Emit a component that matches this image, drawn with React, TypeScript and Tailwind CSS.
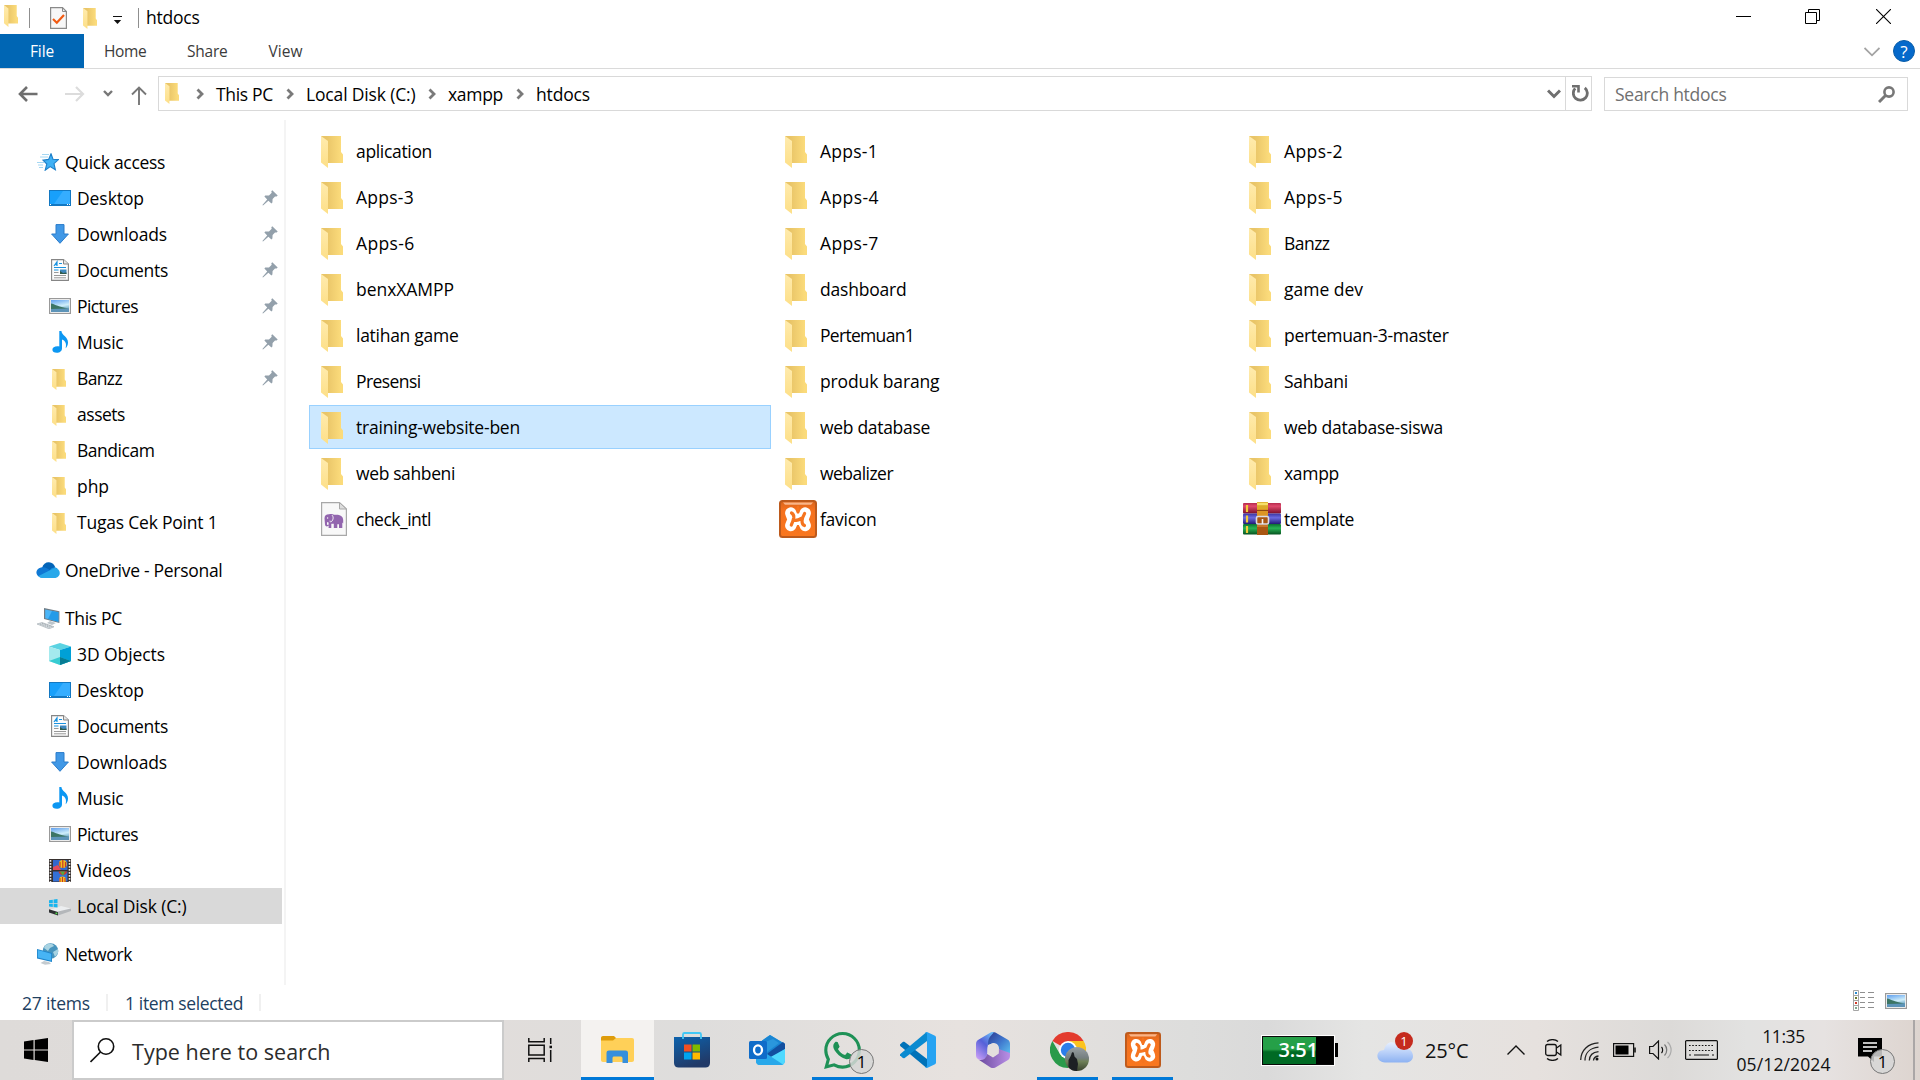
import React, { useLayoutEffect, useRef, useState } from "react";

type IconProps = { className?: string };

/* Text spaced out evenly so that it fills the given width in pixels. */
function Fit({ text, w, className = "" }: { text: string; w: number; className?: string }) {
  const ref = useRef<HTMLSpanElement>(null);
  const [spacing, setSpacing] = useState(0);
  useLayoutEffect(() => {
    const el = ref.current;
    if (el) setSpacing((w - 1.5 - el.getBoundingClientRect().width) / text.length);
  }, []);
  return (
    <span className={`shrink-0 whitespace-nowrap pl-px ${className}`}>
      <span ref={ref} style={{ letterSpacing: spacing }}>{text}</span>
    </span>
  );
}

/* ---------- Explorer icons ---------- */

function Folder({ className = "" }: IconProps) {
  return (
    <svg viewBox="0 0 22 32" preserveAspectRatio="none" className={className}>
      <defs>
        <linearGradient id="fBack" x1="0" x2="1" y1="0" y2="0">
          <stop offset="0.25" stopColor="#e9c568" />
          <stop offset="0.9" stopColor="#fbdb7b" />
        </linearGradient>
        <linearGradient id="fFront" x1="0" x2="0" y1="0" y2="1">
          <stop offset="0" stopColor="#ffebae" />
          <stop offset="1" stopColor="#fddf87" />
        </linearGradient>
      </defs>
      <path d="M0 0H20V16L22 18.5V27H4Z" fill="url(#fBack)" />
      <path d="M0 0L7 5V32L0 26.5Z" fill="url(#fFront)" />
    </svg>
  );
}

function QuickStar() {
  return (
    <svg width="22" height="18" viewBox="0 0 22 18">
      <path d="M14 .8L16 6.2L21.4 6.6L17 10.6L18.4 16.8L13.2 13.6L8.2 17.2L9.8 11L6 7.2L11.6 6.4Z" fill="#3fb1f5" stroke="#1d7fc9" strokeWidth="1.1" />
      <path d="M5 1.5H12M3 4H11M0 9.5H7M1 12H6M2 14.5H6" stroke="#9ad2f2" strokeWidth=".9" />
    </svg>
  );
}

function Desktop() {
  return (
    <svg width="22" height="16" viewBox="0 0 22 16">
      <rect width="22" height="16" fill="#1378c2" />
      <rect x="1" y="1" width="20" height="13" fill="#18a0fb" />
      <path d="M14 1H21V14H5Z" fill="#35adff" />
      <path d="M1 14.5H2M18 14.5H19M20 14.5H21" stroke="#fff" />
    </svg>
  );
}

function Download() {
  return (
    <svg width="18" height="20" viewBox="0 0 18 20">
      <path d="M5 .6H13V10H17.4L9 19.3L.6 10H5Z" fill="#4198e6" stroke="#2a7ccb" strokeWidth="1" />
    </svg>
  );
}

function Doc() {
  return (
    <svg width="18" height="22" viewBox="0 0 18 22">
      <path d="M.6 .6H12.5L17.4 5V21.4H.6Z" fill="#fcfcfc" stroke="#858585" strokeWidth="1.1" />
      <path d="M12.5 .6V5H17.4" fill="#e8e8e8" stroke="#858585" />
      <path d="M3 7L6 2.8V7M4 5.7H6M8 4.5H11M3 8.5H15M3 11H7.5" fill="none" stroke="#1a93e0" strokeWidth="1.2" />
      <rect x="9" y="10.5" width="6.5" height="4.5" fill="#3e87bd" />
      <path d="M9 15V12L12 14L15.5 13.5V15Z" fill="#315a4b" />
      <path d="M3 13.5H7.5M3 16.5H15M3 18.8H15" stroke="#999" />
    </svg>
  );
}

function Picture({ className = "w-[22px] h-4" }: IconProps) {
  return (
    <svg viewBox="0 0 22 16" preserveAspectRatio="none" className={className}>
      <defs>
        <linearGradient id="sky" x1="0" x2="0.3" y1="0" y2="1">
          <stop offset="0" stopColor="#5f9fee" />
          <stop offset="0.6" stopColor="#cfeefa" />
          <stop offset="1" stopColor="#5b9bbd" />
        </linearGradient>
      </defs>
      <rect x=".6" y=".6" width="20.8" height="14.8" fill="#fff" stroke="#999" strokeWidth="1.2" />
      <rect x="2" y="2" width="18" height="12" fill="url(#sky)" />
      <path d="M2 5.5C6 6 8 9 20 10.3L12 11.5L2 11Z" fill="#3c7564" />
      <path d="M2 11L20 10.5V14H2Z" fill="#5d94b8" />
    </svg>
  );
}

function Music() {
  return (
    <svg width="17" height="22" viewBox="0 0 17 22">
      <path d="M7.3 0H9.4C10 4.8 16 5.6 16 11.5C16 14 15 16 13.6 17.2C15 12.5 13 9.5 10 8.6V17.2C10 20 7.6 21.8 4.8 21.8C2 21.8.4 20.4.4 18.7C.4 16.4 3 14.8 7.3 15.4Z" fill="#0c97f2" />
    </svg>
  );
}

function Cloud() {
  return (
    <svg width="24" height="16" viewBox="0 0 24 16">
      <path d="M6 6C7 2 10 0 13 .2C16 .4 18.5 2.5 19.3 5.3L13 10Z" fill="#0364b8" />
      <path d="M5 15.5C-1 14.5-1.3 7 5 5.6C9 4.7 11 6.3 14.5 8.5L6 15.5Z" fill="#0f78d4" />
      <path d="M14 8C16 5.2 20 4.8 21.5 7L16 12Z" fill="#1490df" />
      <path d="M2.5 14L13.5 8.5L19 6C25 6.5 25.5 15 19.5 16H6C4.5 16 3.2 15 2.5 14Z" fill="#28a8ea" />
    </svg>
  );
}

function ThisPC() {
  return (
    <svg width="23" height="21" viewBox="0 0 23 21">
      <path d="M7 0L22.4 3.3V15L7 11Z" fill="#707c85" />
      <path d="M8.2 1.5L21.4 4.3V13.7L8.2 10.2Z" fill="#4ab5f7" />
      <path d="M15 2.9L21.4 4.3V13.7L11 11Z" fill="#239be8" />
      <path d="M13 13L19 15L15 17L10 15Z" fill="#bcc5cb" />
      <path d="M0 16L5 14.5L17 18.8L12 20.8Z" fill="#d7dde1" stroke="#9fa8ae" strokeWidth=".6" />
      <path d="M3 16L13 19.5M5 15.2L15 18.8" stroke="#8f989e" strokeWidth=".7" strokeDasharray="1.5 1" />
    </svg>
  );
}

function Cube() {
  return (
    <svg width="22" height="22" viewBox="0 0 22 22">
      <path d="M11 0L22 3.5L11 7L0 3.5Z" fill="#5bd3e2" />
      <path d="M0 3.5L11 7V22L0 18Z" fill="#a4eaee" />
      <path d="M22 3.5L11 7V22L22 18Z" fill="#00a0d6" />
      <path d="M11 14L22 18L11 22L0 18Z" fill="#37ccd2" />
      <path d="M11 14L22 18L11 22Z" fill="#077c94" />
    </svg>
  );
}

function Video() {
  return (
    <svg width="22" height="23" viewBox="0 0 22 23">
      <rect width="22" height="23" fill="#37302e" />
      <rect x="4" y="1" width="14.5" height="10" fill="#3167cd" />
      <rect x="4" y="12.5" width="14.5" height="10" fill="#3470d6" />
      <path d="M1.5 1V23M20.5 1V23" stroke="#e9e9e9" strokeWidth="1.6" strokeDasharray="1.8 1.2" />
      <path d="M4 8L9 6L12 11H4Z" fill="#e14a5b" />
      <circle cx="13.8" cy="5" r="4" fill="#f2c020" />
      <path d="M13.8 1V9M11 3V8M16.5 3V8" stroke="#c8372b" strokeWidth="1.2" />
      <path d="M9.5 12.5C10 17 18 17 18 12.5Z" fill="#cf3929" />
      <path d="M11 12.5L14 17L16 12.5Z" fill="#56a83c" />
      <circle cx="13.5" cy="21" r="3.4" fill="#f2c020" />
      <path d="M13.5 18V23M11 19V23M16 19V23" stroke="#c8372b" strokeWidth="1" />
    </svg>
  );
}

function Disk() {
  return (
    <svg width="22" height="17" viewBox="0 0 22 17" className="mt-[3px]">
      <path d="M0 11L12 7L22 9.5V11.5L9 15.5L0 12.5Z" fill="#eceef0" />
      <path d="M9 12.5L22 9.5V12L9 16.5Z" fill="#b4b7ba" />
      <path d="M0 10.2L9 12.9V16.6L0 13.6Z" fill="#2e3032" />
      <rect x="6.5" y="13.6" width="1.8" height="1.6" fill="#4fe04b" />
      <path d="M0 1.2L3.8 .7V4H0ZM4.6 .6L8.5 0V4H4.6ZM0 4.8H3.8V8L0 7.6ZM4.6 4.8H8.5V8.6L4.6 8Z" fill="#19b5ee" />
    </svg>
  );
}

function Network() {
  return (
    <svg width="22" height="22" viewBox="0 0 22 22">
      <circle cx="13.5" cy="8" r="7.8" fill="#4794bd" />
      <path d="M8 2.5C11 0 16 .4 17 3L13 5L11 8L7 5ZM16 9L21 6V10L18 14Z" fill="#a8d3e2" />
      <path d="M0 6L15 10V19L0 15.5Z" fill="#1f84ca" />
      <path d="M.8 7L14.2 10.8V17.8L.8 14.6Z" fill="#47b4f5" />
      <path d="M7 18L12 19L14 21L8 21.7L3.5 20Z" fill="#c4cbd0" />
    </svg>
  );
}

function Pin() {
  return (
    <svg width="16" height="16" viewBox="0 0 16 16">
      <path d="M10.3 .3L15.7 5.5L14.6 6.6L13 6.4L10.6 9L10.4 12.6L9.4 13.4L6.4 10.7L1 15.6L.4 15L5.2 9.6L2.4 6.6L3.2 5.4L7 5.4L9.7 2.7L9.3 1.3Z" fill="#93a0ab" />
    </svg>
  );
}

function PhpFile() {
  return (
    <svg width="26" height="34" viewBox="0 0 26 34">
      <path d="M.6 .6H18.5L25.4 7V33.4H.6Z" fill="#f8f8f8" stroke="#a8a8a8" strokeWidth="1.2" />
      <path d="M18.5 .6V7H25.4Z" fill="#ddd" stroke="#a8a8a8" />
      <path d="M3.5 16.5C3.5 13.5 5 12.3 8 12.3C10 11.6 12 11.8 13 12.8C18 12.2 22 13.3 22.2 18V21.5L21.3 20.5V26H18V22.3H16.3V26H12.8V21.8H10.3V26H7.6V20.5C6.8 20.5 6.2 20.3 6 20V22C6 23.2 7 23.2 7 22.4L7.6 23C7.4 25 4.2 25 4 22.6Z" fill="#9265ae" />
      <path d="M10.8 13C12.8 14.5 12.5 18 10.3 19.7M10.3 19.7C9.5 20.2 8.8 19.5 9 18.7" fill="none" stroke="#f8f8f8" strokeWidth="1" />
      <circle cx="6.6" cy="16" r=".7" fill="#f8f8f8" />
    </svg>
  );
}

function Xampp({ className = "" }: IconProps) {
  return (
    <svg viewBox="0 0 38 38" className={className} preserveAspectRatio="none">
      <defs>
        <linearGradient id="xg" x1="0" x2="0" y1="0" y2="1">
          <stop offset="0" stopColor="#d9641c" />
          <stop offset="0.25" stopColor="#f5711e" />
          <stop offset="1" stopColor="#f9771f" />
        </linearGradient>
      </defs>
      <rect x="1" y="1" width="36" height="36" rx="2.5" fill="url(#xg)" stroke="#bd5a1c" strokeWidth="2" />
      <path d="M4 2.4H34L32 4.8H6Z" fill="#f9b588" />
      <g fill="none" strokeLinecap="round" strokeLinejoin="round">
        <path d="M11.8 13C12.5 16 14 17.5 14 19.3C14 21 12.5 23 11.8 25.5M26.2 13C25.5 16 24 17.5 24 19.3C24 21 25.5 23 26.2 25.5M14 19.3H24" stroke="#fff" strokeWidth="11.4" />
        <path d="M19 7V11.5M19 31.5V27.5" stroke="#f5741f" strokeWidth="2.6" />
        <path d="M12.5 13C14.5 14 15 15 14.8 17.5C14.5 19 14 21.5 12.3 25M25.6 13.5C23.6 17 23 18.5 23 21C23 23.5 24 25 25.5 25.5M14.5 20.5C17 20.5 20.5 20 23 18" stroke="#f5741f" strokeWidth="3.2" />
      </g>
    </svg>
  );
}

function WinRar() {
  return (
    <svg width="38" height="34" viewBox="0 0 38 34">
      <defs>
        <linearGradient id="rr" x1="0" x2="0" y1="0" y2="1"><stop offset="0" stopColor="#b52a4c" /><stop offset="0.3" stopColor="#e04a6e" /><stop offset="1" stopColor="#7c1029" /></linearGradient>
        <linearGradient id="rb" x1="0" x2="0" y1="0" y2="1"><stop offset="0" stopColor="#3a34a0" /><stop offset="0.4" stopColor="#6a6ae0" /><stop offset="1" stopColor="#231b78" /></linearGradient>
        <linearGradient id="rgn" x1="0" x2="0" y1="0" y2="1"><stop offset="0" stopColor="#0c7030" /><stop offset="0.4" stopColor="#28b455" /><stop offset="1" stopColor="#07521f" /></linearGradient>
      </defs>
      <rect x="0" y="1" width="38" height="10.5" rx="1" fill="url(#rr)" />
      <rect x="0" y="11.5" width="38" height="10.5" rx="1" fill="url(#rb)" />
      <rect x="0" y="22" width="38" height="10.5" rx="1" fill="url(#rgn)" />
      <path d="M4 3V10M4 13.5V20.5M4 24V31" stroke="#f3cd3a" strokeWidth="2.2" />
      <rect x="14" y="0" width="11" height="8" fill="#dcab28" />
      <path d="M14 2H25" stroke="#f5e06a" strokeWidth="2.4" />
      <rect x="14" y="11" width="11" height="22" fill="#a95713" />
      <path d="M14 24H25" stroke="#c9792a" strokeWidth="2" />
      <rect x="14" y="7" width="11" height="8" fill="#dd9523" />
      <path d="M14 8.5H25" stroke="#8f4a10" strokeWidth="1" />
      <rect x="13.5" y="14.5" width="12" height="7.5" rx="1.5" fill="none" stroke="#dcdce2" strokeWidth="1.6" />
      <path d="M19.5 17V22" stroke="#f0f0f4" strokeWidth="1.6" />
    </svg>
  );
}

/* ---------- Title, ribbon, address ---------- */

function TitleBar() {
  return (
    <div className="flex h-[34px] w-full shrink-0">
      <div className="flex h-[34px] w-[145px] shrink-0">
        <div className="w-[29px] pl-1 pt-[5px]"><Folder className="w-[14px] h-[22px]" /></div>
        <div className="mt-2 h-5 w-px bg-[#8f8f8f]" />
        <div className="w-[53px] pl-5 pt-[7px]">
          <svg width="17" height="22" viewBox="0 0 17 22">
            <path d="M.6 .6H12.5L16.4 4.5V21.4H.6Z" fill="#f7f7f7" stroke="#8a8a8a" strokeWidth="1.2" />
            <path d="M12.5 .6V4.5H16.4" fill="none" stroke="#8a8a8a" />
            <path d="M3 12L6.8 15.7L14 8" fill="none" stroke="#f15a12" strokeWidth="2.2" />
          </svg>
        </div>
        <div className="w-[30px] pt-2"><Folder className="w-[14px] h-[21px]" /></div>
        <div className="w-[25px] pt-4">
          <svg width="9" height="8" viewBox="0 0 9 8"><path d="M0 .5H9" stroke="#111" /><path d="M.8 4H8.2L4.5 8Z" fill="#111" /></svg>
        </div>
        <div className="mt-2 h-5 w-px bg-[#8f8f8f]" />
      </div>
      <Fit text="htdocs" w={55} className="text-[17.5px] leading-[35px]" />
      <div className="ml-auto flex pt-[9px]">
        <svg width="15" height="15" viewBox="0 0 15 15" className="mr-[54px]"><path d="M0 7.5H15" stroke="#000" /></svg>
        <svg width="15" height="15" viewBox="0 0 15 15" className="mr-14" fill="none" stroke="#000"><path d="M.5 3.5H11.5V14.5H.5ZM3.5 3V.5H14.5V11.5H12" /></svg>
        <svg width="15" height="15" viewBox="0 0 15 15" className="mr-[29px]"><path d="M0 0L15 15M15 0L0 15" stroke="#000" strokeWidth="1.1" /></svg>
      </div>
    </div>
  );
}

function Ribbon() {
  return (
    <div className="flex h-[35px] shrink-0 border-b border-[#dadada] text-[15.5px] leading-[35px] text-[#3b3b3b]">
      <div className="h-[34px] w-[84px] shrink-0 bg-[#0066b4] pl-[29px] text-white"><Fit text="File" w={25.5} /></div>
      <div className="w-[83px] pl-[19px]"><Fit text="Home" w={44} /></div>
      <div className="w-[81px] pl-[19px]"><Fit text="Share" w={42} /></div>
      <div className="w-[81px] pl-[19.5px]"><Fit text="View" w={35.5} /></div>
      <div className="ml-auto flex">
        <svg width="16" height="10" viewBox="0 0 16 10" className="mt-[13px]" fill="none" stroke="#a3a3a3" strokeWidth="1.8"><path d="M.5 1L8 8.3L15.5 1" /></svg>
        <div className="ml-[13px] mr-[5px] mt-[6px] flex h-[22px] w-[22px] items-center justify-center rounded-full border border-[#0a5da8] bg-[#0569cb] text-[17px] leading-none text-white">?</div>
      </div>
    </div>
  );
}

function Crumb({ label, w, className }: { label: string; w: number; className: string }) {
  return (
    <div className={`flex shrink-0 items-center ${className}`}>
      <svg viewBox="0 0 8 12" className="h-[12px] w-[8px] shrink-0" fill="none" stroke="#7a7a7a" strokeWidth="2.8">
        <path d="M1.5 1.5L6 6L1.5 10.5" />
      </svg>
      <Fit text={label} w={w} className="ml-[11px] mt-px" />
    </div>
  );
}

function AddressRow() {
  return (
    <div className="flex h-[51px] shrink-0 pt-[7px] text-[17.5px]">
      <div className="flex h-[35px] w-[158px] shrink-0 items-center">
        <svg width="20" height="16" viewBox="0 0 20 16" className="ml-[18px]" fill="none" stroke="#6f6f6f" strokeWidth="2.6"><path d="M9 1L2 8L9 15M2 8H19.5" /></svg>
        <svg width="20" height="16" viewBox="0 0 20 16" className="ml-[27px]" fill="none" stroke="#dcdcdc" strokeWidth="2.2"><path d="M11 1L18 8L11 15M18 8H0" /></svg>
        <svg width="10" height="7" viewBox="0 0 10 7" className="ml-[18px]" fill="none" stroke="#777" strokeWidth="2.4"><path d="M1 1L5 5L9 1" /></svg>
        <svg width="16" height="19" viewBox="0 0 16 19" className="ml-[18px] mt-1" fill="none" stroke="#777" strokeWidth="1.9"><path d="M1 8.5L8 1.5L15 8.5M8 2V19" /></svg>
      </div>
      <div className="flex h-[35px] w-[1434px] shrink-0 items-center border border-[#d9d9d9]">
        <Folder className="ml-1.5 h-[21px] w-[14px] shrink-0" />
        <Crumb label="This PC" w={58.5} className="ml-[17px] w-[90px]" />
        <Crumb label="Local Disk (C:)" w={111} className="w-[142px]" />
        <Crumb label="xampp" w={56.5} className="w-[88px]" />
        <Crumb label="htdocs" w={55.5} className="" />
        <svg width="14" height="10" viewBox="0 0 14 10" className="ml-auto mr-[4px] shrink-0" fill="none" stroke="#6f6f6f" strokeWidth="3"><path d="M1 1.5L7 7.5L13 1.5" /></svg>
        <div className="flex h-[33px] w-[26px] shrink-0 items-center border-l border-[#d9d9d9] pl-[6px]">
          <svg width="17" height="17" viewBox="0 0 17 17" fill="none" stroke="#6f6f6f"><path d="M12.8 2.8A7 7 0 1 1 3.2 3.4" strokeWidth="2.8" /><path d="M0 1.3H6.5V7.5" strokeWidth="2.6" /></svg>
        </div>
      </div>
      <div className="ml-3 mt-px flex h-[34px] w-[304px] shrink-0 items-center border border-[#d9d9d9] pl-[9px] text-[#707070]">
        <Fit text="Search htdocs" w={113} className="mt-px" />
        <svg width="17" height="17" viewBox="0 0 17 17" className="ml-auto mr-3" fill="none" stroke="#777"><circle cx="11" cy="6" r="4.6" strokeWidth="2.6" /><path d="M7.5 9.5L1 16" strokeWidth="3" /></svg>
      </div>
    </div>
  );
}

/* ---------- Sidebar ---------- */

type Nav = { label: string; w: number; icon: React.ReactNode; pinned?: boolean; selected?: boolean };

const smallFolder = <Folder className="mr-[2px] mt-0.5 h-[21px] w-[14px]" />;

const quick: Nav[] = [
  { label: "Desktop", w: 68.5, icon: <Desktop />, pinned: true },
  { label: "Downloads", w: 91.5, icon: <Download />, pinned: true },
  { label: "Documents", w: 92.5, icon: <Doc />, pinned: true },
  { label: "Pictures", w: 62.5, icon: <Picture />, pinned: true },
  { label: "Music", w: 48, icon: <Music />, pinned: true },
  { label: "Banzz", w: 46.5, icon: smallFolder, pinned: true },
  { label: "assets", w: 49.5, icon: smallFolder },
  { label: "Bandicam", w: 79, icon: smallFolder },
  { label: "php", w: 33.5, icon: smallFolder },
  { label: "Tugas Cek Point 1", w: 142, icon: smallFolder },
];

const pc: Nav[] = [
  { label: "3D Objects", w: 89.5, icon: <Cube /> },
  { label: "Desktop", w: 68.5, icon: <Desktop /> },
  { label: "Documents", w: 92.5, icon: <Doc /> },
  { label: "Downloads", w: 91.5, icon: <Download /> },
  { label: "Music", w: 48, icon: <Music /> },
  { label: "Pictures", w: 62.5, icon: <Picture /> },
  { label: "Videos", w: 55.5, icon: <Video /> },
  { label: "Local Disk (C:)", w: 111, icon: <Disk />, selected: true },
];

function Root({ label, w, icon, className = "" }: { label: string; w: number; icon: React.ReactNode; className?: string }) {
  return (
    <div className={`flex h-9 items-center pl-9 ${className}`}>
      <div className="flex w-6 shrink-0 justify-center">{icon}</div>
      <Fit text={label} w={w} className="ml-1" />
    </div>
  );
}

function Child({ item }: { item: Nav }) {
  return (
    <div className={`flex h-9 w-[282px] items-center pl-12 ${item.selected ? "bg-[#d9d9d9]" : ""}`}>
      <div className="flex w-6 shrink-0 justify-center">{item.icon}</div>
      <Fit text={item.label} w={item.w} className="ml-1" />
      {item.pinned && <div className="ml-auto mr-1"><Pin /></div>}
    </div>
  );
}

function Sidebar() {
  return (
    <div className="h-[865px] w-[286px] shrink-0 border-r-2 border-[#f4f4f4] pt-6">
      <Root label="Quick access" w={101.5} icon={<QuickStar />} />
      {quick.map((n) => <Child key={n.label} item={n} />)}
      <Root label="OneDrive - Personal" w={159} icon={<Cloud />} className="mt-3" />
      <Root label="This PC" w={58.5} icon={<ThisPC />} className="mt-3" />
      {pc.map((n) => <Child key={n.label} item={n} />)}
      <Root label="Network" w={68.5} icon={<Network />} className="mt-3" />
    </div>
  );
}

/* ---------- File grid ---------- */

const files: [string, number][] = [
  ["aplication", 77.5], ["Apps-1", 59.5], ["Apps-2", 60.5],
  ["Apps-3", 59.5], ["Apps-4", 60.5], ["Apps-5", 60.5],
  ["Apps-6", 60], ["Apps-7", 60], ["Banzz", 47],
  ["benxXAMPP", 99.5], ["dashboard", 88], ["game dev", 80.5],
  ["latihan game", 104], ["Pertemuan1", 95.5], ["pertemuan-3-master", 166],
  ["Presensi", 66], ["produk barang", 121], ["Sahbani", 65.5],
  ["training-website-ben", 165.5], ["web database", 111.5], ["web database-siswa", 160.5],
  ["web sahbeni", 100.5], ["webalizer", 74.5], ["xampp", 56.5],
  ["check_intl", 76.5], ["favicon", 58], ["template", 71.5],
];

function FileIcon({ name }: { name: string }) {
  if (name === "check_intl") return <div className="pl-1.5"><PhpFile /></div>;
  if (name === "favicon") return <Xampp className="h-[38px] w-[38px]" />;
  if (name === "template") return <WinRar />;
  return <Folder className="ml-1.5 mt-0.5 h-8 w-[22px]" />;
}

function FileGrid() {
  return (
    <div className="grid auto-rows-[44px] grid-cols-[462px_462px_462px] content-start gap-x-0.5 gap-y-0.5 pl-[23px] pt-[9px]">
      {files.map(([name, w]) => (
        <div
          key={name}
          className={`flex items-center border pl-[5px] ${name === "training-website-ben" ? "border-[#99d1ff] bg-[#cce8ff]" : "border-transparent"}`}
        >
          <div className="w-[38px] shrink-0">
            <FileIcon name={name} />
          </div>
          <Fit text={name} w={w} className="ml-0.5" />
        </div>
      ))}
    </div>
  );
}

function StatusBar() {
  return (
    <div className="flex h-[35px] shrink-0 text-[17.5px] leading-[37px] text-[#21405f]">
      <div className="w-[106px] pl-[21px]"><Fit text="27 items" w={69.5} /></div>
      <div className="mt-[9px] h-[17px] w-0.5 bg-[#f0f0f0]" />
      <div className="w-[151px] pl-[16px]"><Fit text="1 item selected" w={119.5} /></div>
      <div className="mt-[9px] h-[17px] w-0.5 bg-[#f0f0f0]" />
      <div className="ml-auto flex pt-[5px]">
        <svg width="21" height="21" viewBox="0 0 21 21">
          <path d="M.5 .5H5.5V20.5H.5ZM.5 5.5H5.5M.5 10.5H5.5M.5 15.5H5.5" fill="#fff" stroke="#a5a5a5" />
          <path d="M7 2.5H12M15 2.5H21M7 7.5H12M15 7.5H21M7 12.5H12M15 12.5H21M7 17.5H12M15 17.5H21" stroke="#8f8f8f" />
          <rect x="2" y="2" width="2" height="2" fill="#2a8bd0" />
          <rect x="2" y="7" width="2" height="2" fill="#6c7c2c" />
          <rect x="2" y="12" width="2" height="2" fill="#d23b28" />
          <rect x="2" y="17" width="2" height="2" fill="#7fa98c" />
        </svg>
        <Picture className="ml-[11px] mr-[13px] mt-[3px] h-4 w-[22px]" />
      </div>
    </div>
  );
}

/* ---------- Taskbar ---------- */

function Slot({ children, active = false }: { children: React.ReactNode; active?: boolean }) {
  return (
    <div className="relative flex h-[60px] w-[75px] shrink-0 items-center justify-center">
      {children}
      {active && <div className="absolute inset-x-[7px] bottom-0 h-[3px] bg-[#0079d8]" />}
    </div>
  );
}

function Badge({ className = "" }: IconProps) {
  return (
    <div className={`absolute flex h-[25px] w-[25px] items-center justify-center rounded-full border border-[#777] bg-[#d6d6d6]/85 text-[17px] leading-none text-black ${className}`}>1</div>
  );
}

function Explorer() {
  return (
    <svg width="33" height="28" viewBox="0 0 33 28">
      <path d="M0 2C0 .8 .8 0 2 0H13L16 3L13 6H0Z" fill="#de9c0b" />
      <path d="M0 4.5H12L15 2H31C32.2 2 33 2.8 33 4V24C33 25.2 32.2 26 31 26H2C.8 26 0 25.2 0 24Z" fill="#ffd058" />
      <path d="M5.5 27V17C5.5 15.3 6.5 14.5 8 14.5H24.5C26 14.5 27 15.3 27 17V27H21.5V22.5C21.5 21 20.7 20.5 19.5 20.5H13.5C12 20.5 11.5 21 11.5 22.5V27Z" fill="#378fdc" />
    </svg>
  );
}

function Store() {
  return (
    <svg width="36" height="36" viewBox="0 0 36 36">
      <defs><linearGradient id="st" x1="0" x2="0.4" y1="0" y2="1"><stop offset="0" stopColor="#0c62ad" /><stop offset="1" stopColor="#213a68" /></linearGradient></defs>
      <path d="M0 5H36V31C36 34 34 35.5 31.5 35.5H4.5C2 35.5 0 34 0 31Z" fill="url(#st)" />
      <path d="M9 7V2.5C9 1.4 9.7 1 10.5 1H25.5C26.4 1 27 1.5 27 2.5V7" fill="none" stroke="#42c7f5" strokeWidth="1.8" />
      <rect x="10" y="12.5" width="7.5" height="7" fill="#f25022" /><rect x="18.5" y="12.5" width="7.5" height="7" fill="#7fba00" />
      <rect x="10" y="20.5" width="7.5" height="7" fill="#00a4ef" /><rect x="18.5" y="20.5" width="7.5" height="7" fill="#ffb900" />
    </svg>
  );
}

function Outlook() {
  return (
    <svg width="37" height="30" viewBox="0 0 37 30">
      <path d="M7 10L21 0L36 9V25C36 28 34.5 30 32 30H11C8 30 7 28 7 26Z" fill="#28a8ea" />
      <path d="M13 5.5L21 0L36 9L22 18H12Z" fill="#1a85d2" />
      <path d="M15 21L34 7L36 9V14L20 25Z" fill="#124fa0" />
      <path d="M11 9L24 4L30 8L18 17Z" fill="#2a97dd" />
      <path d="M9 29L36 14V25C36 28 34.5 30 32 30H11Z" fill="#4fd9ff" />
      <path d="M7 22L18 19L34 29.5C33 30 32 30 32 30H11C8 30 7 28 7 26Z" fill="#28a8ea" />
      <rect x="0" y="6" width="18" height="18" rx="1.5" fill="#0f6cc9" />
      <ellipse cx="9" cy="15" rx="4" ry="4.6" fill="none" stroke="#fff" strokeWidth="2.3" />
    </svg>
  );
}

function WhatsApp() {
  return (
    <svg width="37" height="37" viewBox="0 0 24 24" fill="#1e9156">
      <path d="M17.472 14.382c-.297-.149-1.758-.867-2.03-.967-.273-.099-.471-.148-.67.15-.197.297-.767.966-.94 1.164-.173.199-.347.223-.644.075-.297-.15-1.255-.463-2.39-1.475-.883-.788-1.48-1.761-1.653-2.059-.173-.297-.018-.458.13-.606.134-.133.298-.347.446-.52.149-.174.198-.298.298-.497.099-.198.05-.371-.025-.52-.075-.149-.669-1.612-.916-2.207-.242-.579-.487-.5-.669-.51-.173-.008-.371-.01-.57-.01-.198 0-.52.074-.792.372-.272.297-1.04 1.016-1.04 2.479 0 1.462 1.065 2.875 1.213 3.074.149.198 2.096 3.2 5.077 4.487.709.306 1.262.489 1.694.625.712.227 1.36.195 1.871.118.571-.085 1.758-.719 2.006-1.413.248-.694.248-1.289.173-1.413-.074-.124-.272-.198-.57-.347m-5.421 7.403h-.004a9.87 9.87 0 01-5.031-1.378l-.361-.214-3.741.982.998-3.648-.235-.374a9.86 9.86 0 01-1.51-5.26c.001-5.45 4.436-9.884 9.888-9.884 2.64 0 5.122 1.03 6.988 2.898a9.825 9.825 0 012.893 6.994c-.003 5.45-4.437 9.884-9.885 9.884m8.413-18.297A11.815 11.815 0 0012.05 0C5.495 0 .16 5.335.157 11.892c0 2.096.547 4.142 1.588 5.945L.057 24l6.305-1.654a11.882 11.882 0 005.683 1.448h.005c6.554 0 11.89-5.335 11.893-11.893a11.821 11.821 0 00-3.48-8.413Z" />
    </svg>
  );
}

function VSCode() {
  return (
    <svg width="36" height="36" viewBox="0 0 36 36">
      <path d="M0 12.5L2.5 10.2C3.2 9.6 4 9.6 4.7 10L27 27V36L26 35.5L.6 14.2C-.1 13.6-.1 13 0 12.5Z" fill="#0072b8" />
      <path d="M0 23.3L2.5 25.8C3.2 26.4 4 26.4 4.7 26L27 9V0L26 .5L.6 21.8C-.1 22.4-.1 22.9 0 23.3Z" fill="#0a8ad0" />
      <path d="M27 0L35 3.8C35.7 4.2 36 4.7 36 5.4V30.6C36 31.3 35.7 31.8 35 32.2L27 36C26.2 36 25.6 35.6 25.4 35C26.5 35.2 27 34.5 27 33.5V2.5C27 1.5 26.5 .8 25.4 1C25.6 .4 26.2 0 27 0Z" fill="#26a3f2" />
    </svg>
  );
}

function M365() {
  return (
    <svg width="34" height="36" viewBox="0 0 34 36">
      <defs>
        <linearGradient id="ma" x1="0.8" x2="0.2" y1="0" y2="1"><stop offset="0" stopColor="#6ab7f5" /><stop offset="0.45" stopColor="#5560d8" /><stop offset="1" stopColor="#c49bf5" /></linearGradient>
        <linearGradient id="mb" x1="0" x2="1" y1="0" y2="1"><stop offset="0" stopColor="#2c3a90" /><stop offset="0.5" stopColor="#3f76cd" /><stop offset="1" stopColor="#5fc4f0" /></linearGradient>
        <linearGradient id="mc" x1="0" x2="1" y1="0" y2="0"><stop offset="0" stopColor="#6b4a9e" /><stop offset="1" stopColor="#b98fe6" /></linearGradient>
      </defs>
      <path d="M17 0C18 0 18.6 .2 19.4 .6L31.5 7.6C33.2 8.6 34 10 34 11.8V23L23 17.5C23 13 21 11.5 17.5 11L12 13V4Z" fill="url(#mb)" />
      <path d="M17.5 0C19 0 13.5 4 12.5 8C11.6 12 12 20 10.5 24.5C9.3 27.5 6 28.8 3 27.6C1 26.7 0 25.5 0 23.5V12C0 10 .8 8.6 2.4 7.7L14.6 .6C15.5 .1 16.4 0 17.5 0Z" fill="url(#ma)" />
      <path d="M2.4 27.4C6.5 29 10 27 11.2 22L17 25.5L22.8 21.5V17L34 21V24C34 26 33.2 27.3 31.6 28.3L19.4 35.4C17.6 36.2 16.2 36.2 14.6 35.4Z" fill="url(#mc)" />
      <path d="M17 11.3C18.3 11.3 21 12.8 22 14C22.8 15.2 22.8 19.6 22 21C21 22.4 18.4 24.3 17 24.3C15.6 24.3 13 22.4 12 21C11.2 19.6 11.2 15.2 12 14C13 12.8 15.7 11.3 17 11.3Z" fill="#e3dfdd" />
    </svg>
  );
}

function Chrome() {
  return (
    <div className="relative h-9 w-9">
      <svg width="36" height="36" viewBox="0 0 36 36">
        <path d="M18 18L2.4 9A18 18 0 0 1 33.6 9H18Z" fill="#e33b2e" />
        <path d="M18 18V9H33.6A18 18 0 0 1 18 36L25.8 22.5Z" fill="#fcc31e" />
        <path d="M18 36A18 18 0 0 1 2.4 9L10.2 22.5L18 27L25.8 22.5Z" fill="#2a9a4a" />
        <circle cx="18" cy="18" r="9" fill="#fff" />
        <circle cx="18" cy="18" r="7.2" fill="#2b7de9" />
      </svg>
      <svg width="24" height="24" viewBox="0 0 24 24" className="absolute left-[15px] top-[15px]">
        <defs><linearGradient id="avg" x1="0" x2="0" y1="0" y2="1"><stop offset="0" stopColor="#989fa3" /><stop offset="0.45" stopColor="#767f80" /><stop offset="0.6" stopColor="#6f8058" /><stop offset="1" stopColor="#39422f" /></linearGradient></defs>
        <clipPath id="av"><circle cx="12" cy="12" r="12" /></clipPath>
        <g clipPath="url(#av)">
          <rect width="24" height="24" fill="url(#avg)" />
          <path d="M3.5 24V13L5.5 9.5L6.5 7C6.5 4.5 9 4.5 9 7L9.5 9.5L12 12L13 17L12 24Z" fill="#1d2024" />
        </g>
      </svg>
    </div>
  );
}

function Weather() {
  return (
    <div className="relative h-[30px] w-[37px]">
      <svg width="37" height="21" viewBox="0 0 37 21" className="absolute bottom-0.5">
        <defs><linearGradient id="wc" x1="0" x2="0" y1="0" y2="1"><stop offset="0" stopColor="#e6efff" /><stop offset="1" stopColor="#8db2f2" /></linearGradient></defs>
        <path d="M8 20.5C-2 20-2 8 7 8C9 1 13-1 18 1C22 2 23 5 24 8C31 4 36 9 36 14C36 18 33 20.5 29 20.5Z" fill="url(#wc)" />
      </svg>
      <div className="absolute -top-[3px] left-[18px] flex h-[18px] w-[18px] items-center justify-center rounded-full bg-[#c52b1e] text-[13px] leading-none text-white">1</div>
    </div>
  );
}

function Tray() {
  return (
    <div className="flex h-[60px] shrink-0 items-center text-[#111]">
      <div className="flex w-[116px] shrink-0 items-center">
        <div className="flex h-[31px] w-[74px] items-center justify-center border border-white bg-[#0a0a0a]">
          <div className="flex h-[27px] w-[70px] bg-black">
            <div className="flex h-[27px] w-[53px] items-center justify-end bg-gradient-to-b from-[#25a048] from-45% to-[#006a24] to-55% text-[20px] font-semibold leading-none text-white">
              <Fit text="3:51" w={41} className="-mr-[2px]" />
            </div>
          </div>
        </div>
        <div className="h-[14px] w-[3px] bg-black" />
      </div>
      <div className="flex w-[48px] shrink-0"><Weather /></div>
      <div className="-ml-px w-[83px] shrink-0 pt-0.5 text-[20px]"><Fit text="25°C" w={45} /></div>
      <svg width="18" height="10" viewBox="0 0 18 10" className="mr-5 shrink-0" fill="none" stroke="#111" strokeWidth="1.4"><path d="M.5 9.5L9 1L17.5 9.5" /></svg>
      <svg width="17" height="22" viewBox="0 0 17 22" className="mr-[18px] shrink-0" fill="none" stroke="#111" strokeWidth="1.3">
        <rect x=".7" y="5.5" width="10.6" height="11" rx="2" /><path d="M11.5 9L15.8 6V16L11.5 13M2 2.5C5 0 10 0 13 2.5M2 19.5C5 22 10 22 13 19.5" />
      </svg>
      <svg width="19" height="19" viewBox="0 0 19 19" className="mr-[14px] mt-0.5 shrink-0" fill="none" stroke="#222" strokeWidth="1.3">
        <path d="M.7 18C1 8 8 1.5 18.5 .9M5 18.5C5 11 10 6 18.5 5.2M9.3 18.5C9.5 13.5 13 10.3 18.5 9.7M13.5 18.5C13.6 16 15 14.5 18.5 14" /><circle cx="17" cy="17" r="1.5" fill="#111" stroke="none" />
      </svg>
      <svg width="23" height="14" viewBox="0 0 23 14" className="mr-[13px] shrink-0"><rect x=".6" y=".6" width="20" height="12.8" fill="none" stroke="#111" strokeWidth="1.2" /><rect x="2.5" y="2.5" width="13" height="9" /><path d="M22 4.5V9.5" stroke="#111" strokeWidth="1.6" /></svg>
      <svg width="23" height="20" viewBox="0 0 23 20" className="mr-[13px] shrink-0" fill="none" stroke="#111" strokeWidth="1.2">
        <path d="M.6 6.5H4L9.5 1V19L4 13.5H.6Z" /><path d="M12.5 7C14 8.5 14 11.5 12.5 13" /><path d="M15.5 4.5C18.5 7.5 18.5 12.5 15.5 15.5" stroke="#777" /><path d="M18.5 2C23.3 6.5 23.3 13.5 18.5 18" stroke="#aaa" />
      </svg>
      <svg width="33" height="20" viewBox="0 0 33 20" className="shrink-0" fill="none" stroke="#111" strokeWidth="1.2">
        <rect x=".6" y=".6" width="31.8" height="18.8" rx="1" /><path d="M4 5.5H29M4 10.5H29" strokeDasharray="1.6 1.6" /><path d="M4 15H6M9 15H24M27 15H29" />
      </svg>
      <div className="flex w-[130px] shrink-0 flex-col items-center text-[17.5px] leading-7">
        <Fit text="11:35" w={44} />
        <Fit text="05/12/2024" w={95.5} />
      </div>
      <div className="relative h-[60px] w-[65px] shrink-0">
        <svg width="24" height="24" viewBox="0 0 24 24" className="absolute left-[10px] top-[18px]"><path d="M0 0H24V18.5H16V24L10 18.5H0Z" fill="#000" /><path d="M5 5H19M5 9H19M5 13H14" stroke="#fff" strokeWidth="1.3" /></svg>
        <Badge className="left-[22px] top-[29px]" />
      </div>
      <div className="h-[60px] w-[7px] shrink-0 border-l-2 border-[#aaa6a6]" />
    </div>
  );
}

function Taskbar() {
  return (
    <div className="flex h-[60px] w-full shrink-0 bg-[linear-gradient(90deg,#dedbd9_0%,#e1dddb_25%,#dedddc_36%,#e7e2df_50%,#dddddc_62%,#dadada_66%,#e5e5e4_71%,#e6e1de_80%,#dcdad8_87%,#e2e2e1_91%,#e6e2e1_95%,#ddd4cf_100%)]">
      <div className="flex w-[72px] shrink-0 items-center pl-6">
        <svg width="24" height="24" viewBox="0 0 24 24"><path d="M0 3.5L9.5 2.1V11.4H0ZM10.7 1.9L24 0V11.4H10.7ZM0 12.6H9.5V21.9L0 20.5ZM10.7 12.6H24V24L10.7 22.1Z" /></svg>
      </div>
      <div className="flex h-[60px] w-[432px] shrink-0 items-center border-2 border-[#cbcbcb] bg-white pl-4">
        <svg width="25" height="25" viewBox="0 0 25 25" fill="none" stroke="#111" strokeWidth="1.6"><circle cx="16" cy="8.5" r="7.7" /><path d="M10.5 14L.5 24" /></svg>
        <Fit text="Type here to search" w={200} className="ml-4 mt-[5px] text-[21.5px] text-[#2c2c2c]" />
      </div>
      <div className="flex w-[77px] shrink-0 items-center pl-6">
        <svg width="25" height="24" viewBox="0 0 25 24" fill="none" stroke="#111" strokeWidth="1.5"><path d="M.8 0V3.7H16.2V0M.8 7.3H16.2V17H.8ZM.8 24V20.5H16.2V24M22.7 0V6M22.7 12V24" /><rect x="21.5" y="7.7" width="2.5" height="2.5" fill="#111" stroke="none" /></svg>
      </div>
      <div className="flex h-[60px] w-[73px] shrink-0 items-center justify-center border-b-[3px] border-[#0079d8] bg-[#f4f2f0] pt-[3px]">
        <Explorer />
      </div>
      <Slot><Store /></Slot>
      <div className="w-px shrink-0" />
      <Slot><Outlook /></Slot>
      <Slot active><WhatsApp /><Badge className="left-[44px] top-[29px]" /></Slot>
      <Slot><VSCode /></Slot>
      <Slot><M365 /></Slot>
      <Slot active><Chrome /></Slot>
      <Slot active><Xampp className="h-9 w-9" /></Slot>
      <div className="w-[81px] shrink-0" />
      <Tray />
    </div>
  );
}

export default function App() {
  return (
    <div className="flex h-[1080px] w-[1920px] flex-col overflow-hidden bg-white font-['Open_Sans','Noto_Sans',sans-serif] text-black">
      <TitleBar />
      <Ribbon />
      <AddressRow />
      <div className="flex h-[865px] shrink-0 text-[17.5px] leading-6">
        <Sidebar />
        <FileGrid />
      </div>
      <StatusBar />
      <Taskbar />
    </div>
  );
}
